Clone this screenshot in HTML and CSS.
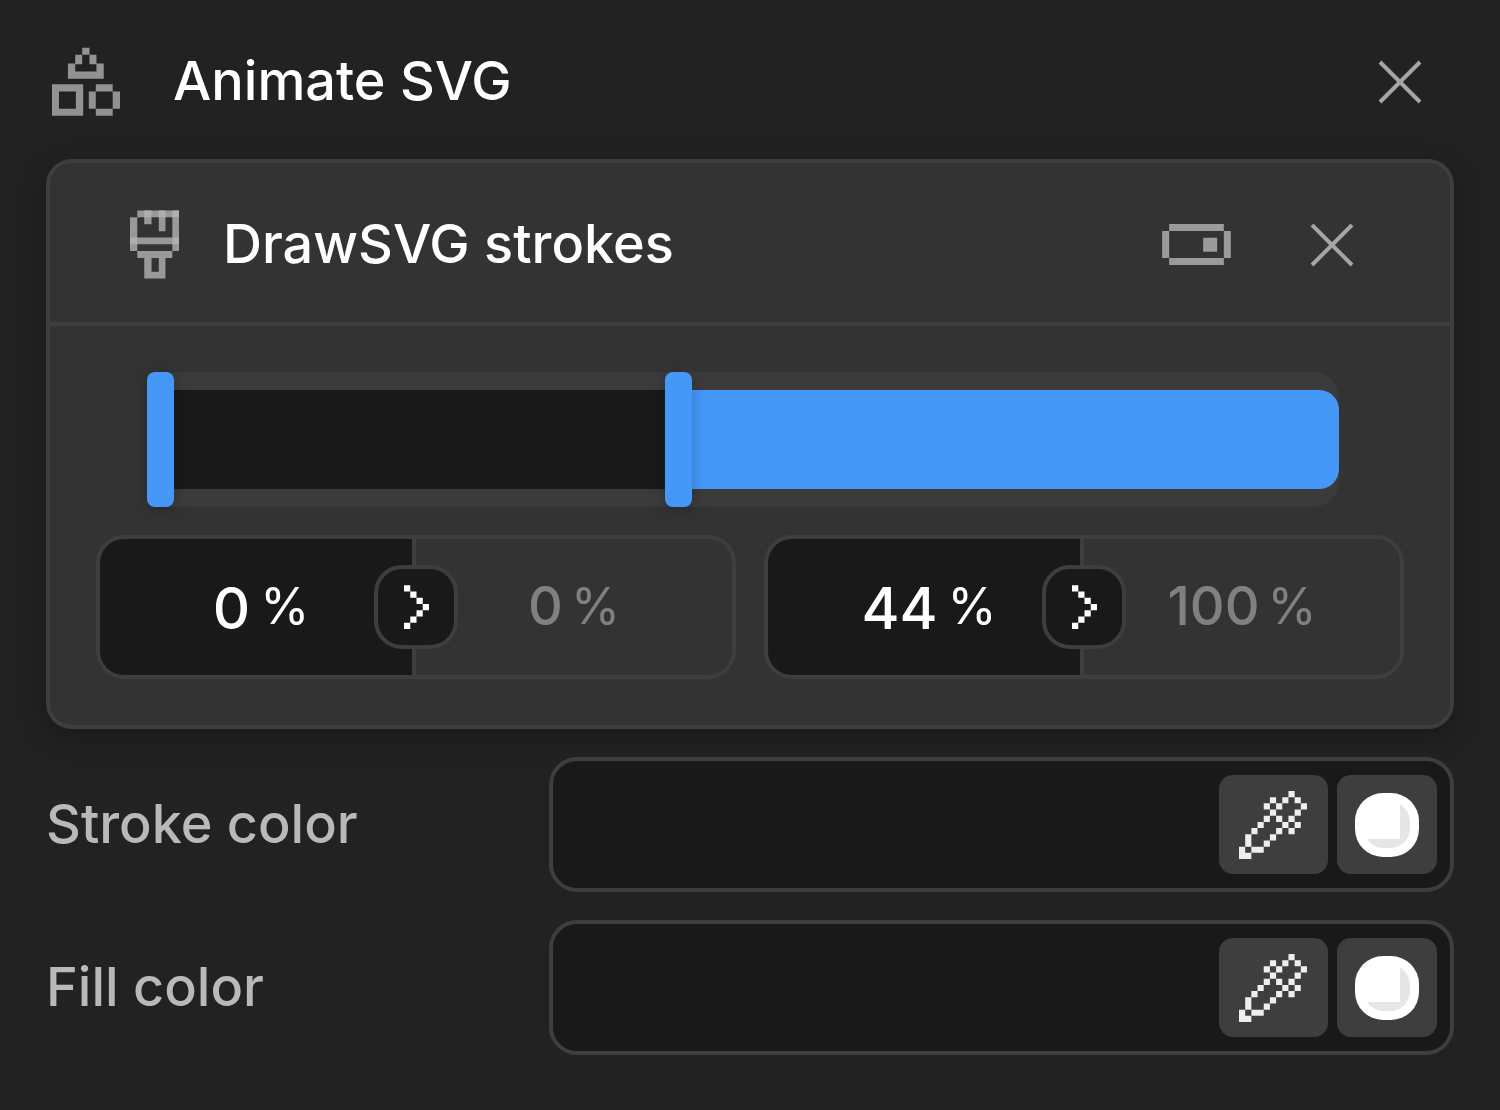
FILE: index.html
```
<!DOCTYPE html>
<html lang="en">
<head>
<meta charset="utf-8">
<meta name="viewport" content="width=device-width, initial-scale=1">
<title>Animate SVG</title>
<link rel="stylesheet" href="styles.css">
</head>
<body>
<svg class="defs" aria-hidden="true">
  <symbol id="close" viewBox="0 0 44 44"><path d="M2 2L42 42M42 2L2 42" fill="none" stroke="currentColor" stroke-width="4"/></symbol>
  <symbol id="chevron" viewBox="0 0 4 7"><path d="M0 0h1v1H0zM1 1h1v1H1zM2 2h1v1H2zM3 3h1v1H3zM2 4h1v1H2zM1 5h1v1H1zM0 6h1v1H0z" fill="currentColor"/></symbol>
  <symbol id="dropper" viewBox="0 0 11 11"><path fill="currentColor" d="M8 0h1v1H8zM5 1h1v1H5zM7 1h1v1H7zM9 1h1v1H9zM4 2h1v1H4zM6 2h1v1H6zM10 2h1v1H10zM5 3h1v1H5zM9 3h1v1H9zM4 4h1v1H4zM6 4h1v1H6zM8 4h1v1H8zM3 5h1v1H3zM7 5h1v1H7zM9 5h1v1H9zM2 6h1v1H2zM6 6h1v1H6zM8 6h1v1H8zM1 7h1v2H1zM5 7h1v1H5zM4 8h1v1H4zM0 9h1v1h1v1H0zM2 9h2v1H2z"/></symbol>
  <symbol id="swatch" viewBox="0 0 64 64"><rect width="64" height="64" rx="28" fill="#fff"/><rect x="9" y="9" width="46" height="46" rx="20" fill="#e6e6e6"/><path d="M9 9H45V46H9z" fill="#fff"/></symbol>
</svg>
<main class="panel">
  <header class="panel-header">
    <svg class="icon-shapes" viewBox="66 51 205 206" aria-hidden="true"><path fill="currentColor" fill-rule="evenodd" d="M157 52h22v21h-22zM136 73h21v29h-21zM179 73h21v29h-21zM114 100h22v24h64v-24h22v46H114zM66 162h94v95H66zM87 184v52h51v-52zM198 162h51v22h-51zM198 236h51v21h-51zM177 184h21v52h-21zM249 184h22v52h-22z"/></svg>
    <h1 class="title">Animate SVG</h1>
    <button class="icon-button" type="button" aria-label="Close panel"><svg class="icon-close"><use href="#close"/></svg></button>
  </header>

  <section class="card">
    <header class="card-header">
      <svg class="icon-brush" viewBox="58 61 148 206" aria-hidden="true"><path fill="currentColor" d="M80 61h126v123h-20v-21H80v21H58V82h22v61h106V82h-21v42h-20V82h-22v21h-22V82H80zM80 184h106v21h-21v62h-64v-62H80zM123 205v41h22v-41z" fill-rule="evenodd"/><path fill="#afafaf" d="M101 61h22v21h-22zM145 61h20v21h-20zM186 61h20v21h-20zM58 143h22v20H58zM186 143h20v20h-20z"/></svg>
      <h2 class="title">DrawSVG strokes</h2>
      <button class="icon-button" type="button" aria-label="Toggle"><svg class="icon-toggle" viewBox="66 72 206 123"><path fill="currentColor" d="M87 72h164v21H87zM87 174h164v21H87zM66 93h21v81H66zM251 93h21v81h-21zM189 113h42v42h-42z"/></svg></button>
      <button class="icon-button" type="button" aria-label="Remove DrawSVG strokes"><svg class="icon-close"><use href="#close"/></svg></button>
    </header>
    <div class="card-body">
      <div class="slider">
        <div class="slider-track"><div class="slider-rest"></div></div>
        <input class="slider-range" type="range" min="0" max="100" step="0.5" value="0" aria-label="Start">
        <input class="slider-range" type="range" min="0" max="100" step="0.5" value="44.5" aria-label="End">
      </div>
      <div class="pairs">
        <div class="pair">
          <label class="value from"><input class="number" type="text" size="1" value="0" aria-label="Start from"><span>%</span></label>
          <label class="value to"><input class="number" type="text" size="1" value="0" aria-label="Start to"><span>%</span></label>
          <button class="swap" type="button" aria-label="Start direction"><svg class="icon-chevron"><use href="#chevron"/></svg></button>
        </div>
        <div class="pair">
          <label class="value from"><input class="number" type="text" size="2" value="44" aria-label="End from"><span>%</span></label>
          <label class="value to"><input class="number" type="text" size="3" value="100" aria-label="End to"><span>%</span></label>
          <button class="swap" type="button" aria-label="End direction"><svg class="icon-chevron"><use href="#chevron"/></svg></button>
        </div>
      </div>
    </div>
  </section>

  <div class="color-row">
    <label class="color-label" for="stroke">Stroke color</label>
    <div class="color-field">
      <input class="color-input" id="stroke" type="text">
      <button class="tool pick" type="button" aria-label="Pick stroke color"><svg class="icon-dropper"><use href="#dropper"/></svg></button>
      <button class="tool" type="button" aria-label="Stroke swatch"><svg class="icon-swatch"><use href="#swatch"/></svg></button>
    </div>
  </div>
  <div class="color-row">
    <label class="color-label" for="fill">Fill color</label>
    <div class="color-field">
      <input class="color-input" id="fill" type="text">
      <button class="tool pick" type="button" aria-label="Pick fill color"><svg class="icon-dropper"><use href="#dropper"/></svg></button>
      <button class="tool" type="button" aria-label="Fill swatch"><svg class="icon-swatch"><use href="#swatch"/></svg></button>
    </div>
  </div>
</main>
</body>
</html>
```
FILE: styles.css
```
:root {
  --line: #3e3e3e;
  --dark: #191919;
  --blue: #4597f8;
}
* { box-sizing: border-box; }
body {
  margin: 0;
  background: #222;
  color: #fff;
  font: 500 54px/64px Inter, "Liberation Sans", sans-serif;
}
button, input { font: inherit; color: inherit; margin: 0; padding: 0; border: 0; background: none; }
svg { display: block; }
.defs { position: absolute; width: 0; height: 0; }

.panel { display: flex; flex-direction: column; gap: 28px; padding: 0 46px 55px; }
.panel-header { display: flex; align-items: center; height: 159px; margin-bottom: -28px; padding: 4px 32px 0 6px; gap: 53px; color: #929292; }
.title { margin: 0; padding-bottom: 2px; flex: 1; font-size: 54px; font-weight: 500; color: #fff; }
.icon-button { color: #a5a5a5; }
.icon-close { width: 44px; height: 44px; }
.icon-shapes { width: 68px; height: 69px; }
.icon-brush { width: 49px; height: 69px; }
.icon-toggle { width: 69px; height: 41px; color: #9b9b9b; }

.card { border: 4px solid var(--line); border-radius: 26px; background: #333; box-shadow: 0 8px 28px rgba(0, 0, 0, .3); }
.card-header { display: flex; align-items: center; height: 163px; padding: 4px 96px 0 80px; border-bottom: 4px solid var(--line); color: #999; }
.card-header .title { margin-left: 44px; }
.icon-button + .icon-button { margin-left: 79px; }
.card-body { display: flex; flex-direction: column; gap: 28px; padding: 46px; }

.slider { position: relative; height: 135px; margin: 0 65px 0 51px; }
.slider-track { height: 100%; margin-left: 14px; padding: 18px 0; border-radius: 0 26px 26px 0; background: #3b3b3b; }
.slider-rest { height: 100%; border-radius: 0 20px 20px 0; background: linear-gradient(to right, var(--dark) 45%, var(--blue) 45%); }
.slider-range { position: absolute; inset: 0; width: 100%; height: 100%; appearance: none; pointer-events: none; }
.slider-range::-webkit-slider-thumb { appearance: none; width: 27px; height: 135px; border-radius: 8px; background: var(--blue); box-shadow: 0 4px 16px rgba(0, 0, 0, .2); pointer-events: auto; }

.pairs { display: grid; grid-template-columns: 1fr 1fr; gap: 28px; }
.pair { position: relative; display: grid; grid-template-columns: 1fr 1fr; height: 144px; border: 4px solid var(--line); border-radius: 28px; }
.value { display: flex; align-items: center; justify-content: center; gap: 10px; min-width: 0; padding-bottom: 2px; font-size: 50px; font-weight: 400; }
.from { padding-left: 10px; border-right: 4px solid var(--line); border-radius: 24px 0 0 24px; background: var(--dark); }
.number { min-width: 0; field-sizing: content; text-align: right; font-size: 54px; font-weight: 500; }
.from .number { padding-top: 4px; font-size: 58px; }
.to { gap: 8px; color: #808080; }
.swap { position: absolute; top: 50%; left: 50%; translate: -50% -50%; display: grid; place-items: center; width: 84px; height: 84px; border: 4px solid var(--line); border-radius: 28px; background: var(--dark); }
.icon-chevron { width: 25px; height: 44px; }

.color-row { display: grid; grid-template-columns: minmax(0, 5fr) minmax(0, 9fr); align-items: center; }
.color-label { padding-bottom: 2px; color: #b9b9b9; }
.color-field { display: flex; gap: 9px; padding: 14px 13px; border: 4px solid var(--line); border-radius: 28px; background: var(--dark); }
.color-input { flex: 1; width: 0; min-width: 0; }
.tool { display: grid; place-items: center; width: 100px; height: 99px; border-radius: 14px; background: #3e3e3e; color: #eee; }
.pick { width: 109px; }
.icon-dropper { width: 68px; height: 68px; }
.icon-swatch { width: 64px; height: 64px; }
```
